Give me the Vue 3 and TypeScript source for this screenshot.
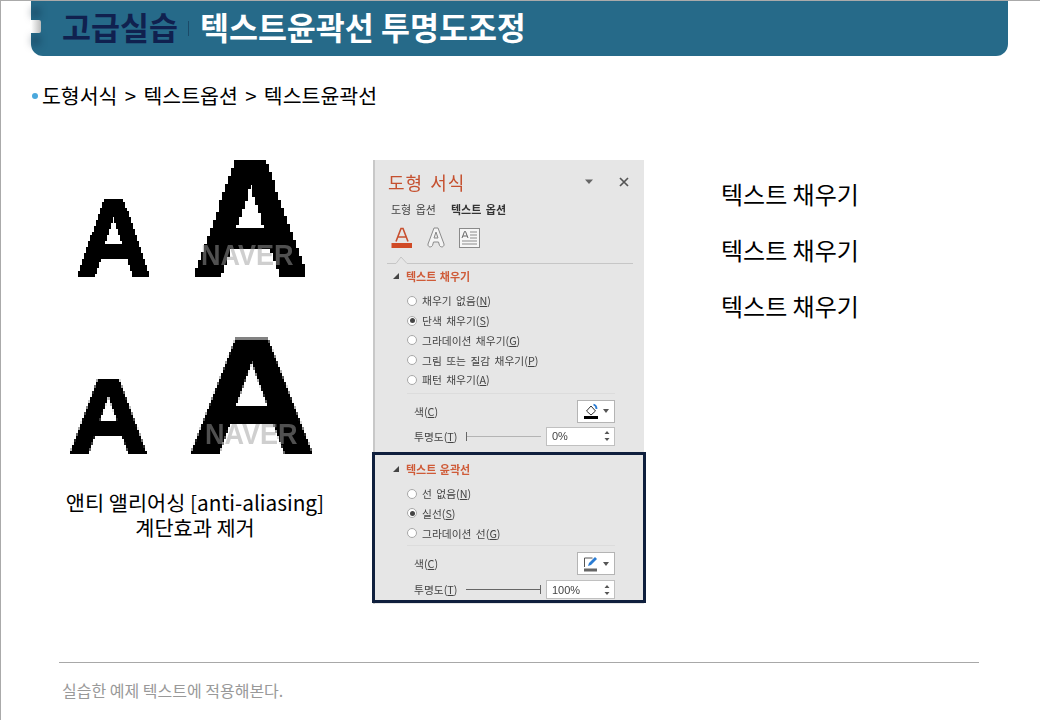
<script setup lang="ts">
const fillOptions = [
  { label: "채우기 없음", key: "N", on: false },
  { label: "단색 채우기", key: "S", on: true },
  { label: "그라데이션 채우기", key: "G", on: false },
  { label: "그림 또는 질감 채우기", key: "P", on: false },
  { label: "패턴 채우기", key: "A", on: false },
];

const lineOptions = [
  { label: "선 없음", key: "N", on: false },
  { label: "실선", key: "S", on: true },
  { label: "그라데이션 선", key: "G", on: false },
];

const samples = ["텍스트 채우기", "텍스트 채우기", "텍스트 채우기"];
</script>

<template>
  <div class="slide">
    <svg class="defs" width="0" height="0" aria-hidden="true">
      <defs>
        <filter id="jag-big" x="-5%" y="-5%" width="110%" height="110%">
          <feFlood x="2" y="2" width="1" height="1" />
          <feComposite width="4" height="4" />
          <feTile result="grid" />
          <feComposite in="SourceGraphic" in2="grid" operator="in" />
          <feMorphology operator="dilate" radius="2" />
          <feComponentTransfer>
            <feFuncA type="discrete" tableValues="0 1" />
          </feComponentTransfer>
        </filter>
        <filter id="jag-small" x="-5%" y="-5%" width="110%" height="110%">
          <feFlood x="1" y="1" width="1" height="1" />
          <feComposite width="3" height="3" />
          <feTile result="grid" />
          <feComposite in="SourceGraphic" in2="grid" operator="in" />
          <feMorphology operator="dilate" radius="1" />
          <feComponentTransfer>
            <feFuncA type="discrete" tableValues="0 1" />
          </feComponentTransfer>
        </filter>
        <filter id="jag-soft" x="-5%" y="-5%" width="110%" height="110%">
          <feFlood x="1" y="1" width="1" height="1" />
          <feComposite width="3" height="3" />
          <feTile result="grid" />
          <feComposite in="SourceGraphic" in2="grid" operator="in" />
          <feMorphology operator="dilate" radius="1" />
        </filter>
      </defs>
    </svg>

    <header class="bar">
      <span class="bar-tab"></span>
      <span class="bar-label">고급실습</span>
      <span class="bar-sep"></span>
      <span class="bar-title">텍스트윤곽선 투명도조정</span>
    </header>

    <p class="crumb"><i class="dot"></i>도형서식 &gt; 텍스트옵션 &gt; 텍스트윤곽선</p>

    <main class="columns">
      <section class="letters">
        <div class="letter-row row-top">
          <span class="glyph g1">A</span>
          <div class="glyph-wrap">
            <span class="glyph g2">A</span>
            <span class="mark">NAVER</span>
          </div>
        </div>
        <div class="letter-row row-bottom">
          <span class="glyph g3">A</span>
          <div class="glyph-wrap">
            <span class="glyph g4">A</span>
            <span class="mark">NAVER</span>
          </div>
        </div>
        <p class="caption">앤티 앨리어싱 [anti-aliasing]<br />계단효과 제거</p>
      </section>

      <section class="panel">
        <div class="panel-head">
          <span class="panel-title">도형 서식</span>
          <span class="panel-tools">
            <svg width="10" height="6" viewBox="0 0 10 6"><path d="M1 0.5h8L5 5z" fill="#666" /></svg>
            <svg width="10" height="10" viewBox="0 0 10 10"><path d="M1 1l8 8M9 1l-8 8" stroke="#555" stroke-width="1.7" fill="none" /></svg>
          </span>
        </div>
        <div class="panel-tabs">
          <span>도형 옵션</span>
          <span class="tab-on">텍스트 옵션</span>
        </div>
        <div class="panel-icons">
          <svg width="22" height="22" viewBox="0 0 22 22">
            <path d="M5 14.5L10 1.5h2l5 13M7 10h8" fill="none" stroke="#c8502f" stroke-width="1.6" />
            <rect x="0.5" y="16" width="20.5" height="5" fill="#d04a26" />
          </svg>
          <svg width="18" height="22" viewBox="0 0 18 22">
            <path d="M7 1h4l6 16c.5 3-3 4-4.500 1.500L11.500 15h-5l-1 3.500C4 21 .5 20 1 17z" fill="#f4f4f4" stroke="#8a8a8a" stroke-width="1" />
            <path d="M9 5L7 11h4z" fill="#e6e6e6" stroke="#8a8a8a" stroke-width="1" />
          </svg>
          <svg width="21" height="20" viewBox="0 0 21 20">
            <rect x="0.500" y="0.500" width="20" height="19" fill="#f6f6f6" stroke="#8a8a8a" />
            <path d="M3 10l2.500-6.500h1L9 10M4 8h4" fill="none" stroke="#666" stroke-width="1" />
            <path d="M11 4h7M11 7h7M11 10h7M3 13h15M3 16h15" stroke="#8a8a8a" stroke-width="1" />
          </svg>
        </div>
        <svg class="panel-rule" width="246" height="8" viewBox="0 0 246 8">
          <path d="M0 7.500H9L14 1l6 6.500H246" fill="none" stroke="#c6c6c6" stroke-width="1" />
        </svg>

        <div class="group">
          <h3 class="group-title"><i class="caret"></i>텍스트 채우기</h3>
          <div class="radios">
            <label v-for="opt in fillOptions" :key="opt.key" class="radio">
              <i class="circle" :class="{ on: opt.on }"></i>
              <span>{{ opt.label }}(<u>{{ opt.key }}</u>)</span>
            </label>
          </div>
          <div class="sep"></div>
          <div class="field field-color">
            <span>색(<u>C</u>)</span>
            <span class="pick">
              <svg width="16" height="16" viewBox="0 0 16 16">
                <path d="M8 3l4.500 5L8 12 3.500 8z" fill="#fff" stroke="#333" stroke-width="1" />
                <path d="M10.500 1.500c2 .5 3 2.500 3 4.500" fill="none" stroke="#2b7cd3" stroke-width="1.800" />
                <rect x="1" y="13" width="14" height="3" fill="#000" />
              </svg>
              <i class="pick-caret"></i>
            </span>
          </div>
          <div class="field field-range">
            <span class="range-label">투명도(<u>T</u>)</span>
            <span class="slider">
              <i class="slider-knob"></i>
            </span>
            <span class="spin">
              0%
              <svg width="6" height="12" viewBox="0 0 6 12"><path d="M3 1l2.500 3h-5zM3 11L0.500 8h5z" fill="#555" /></svg>
            </span>
          </div>
        </div>

        <div class="group boxed">
          <h3 class="group-title"><i class="caret"></i>텍스트 윤곽선</h3>
          <div class="radios">
            <label v-for="opt in lineOptions" :key="opt.key" class="radio">
              <i class="circle" :class="{ on: opt.on }"></i>
              <span>{{ opt.label }}(<u>{{ opt.key }}</u>)</span>
            </label>
          </div>
          <div class="sep"></div>
          <div class="field field-color">
            <span>색(<u>C</u>)</span>
            <span class="pick">
              <svg width="16" height="16" viewBox="0 0 16 16">
                <path d="M1.500 11V2h8" fill="none" stroke="#555" stroke-width="1" />
                <path d="M5 10l1-3 6-6 2 2-6 6z" fill="#2b7cd3" />
                <rect x="1" y="12.500" width="13" height="3" fill="#666" />
              </svg>
              <i class="pick-caret"></i>
            </span>
          </div>
          <div class="field field-range">
            <span class="range-label">투명도(<u>T</u>)</span>
            <span class="slider slider-full">
              <i class="slider-knob"></i>
            </span>
            <span class="spin">
              100%
              <svg width="6" height="12" viewBox="0 0 6 12"><path d="M3 1l2.500 3h-5zM3 11L0.500 8h5z" fill="#555" /></svg>
            </span>
          </div>
        </div>
      </section>

      <section class="samples">
        <p v-for="(text, i) in samples" :key="i">{{ text }}</p>
      </section>
    </main>

    <footer class="foot">
      <p>실습한 예제 텍스트에 적용해본다.</p>
    </footer>
  </div>
</template>

<style scoped>
.slide {
  position: relative;
  box-sizing: border-box;
  width: 1040px;
  height: 720px;
  overflow: hidden;
  border-left: 1px solid #aaa;
  border-top: 1px solid #aaa;
  background: #fff;
  color: #000;
  font-family: "Noto Sans CJK KR", "Noto Sans", sans-serif;
}

.defs {
  position: absolute;
}

.bar {
  position: relative;
  display: flex;
  align-items: center;
  box-sizing: border-box;
  width: 977px;
  height: 56px;
  margin: -1px 0 0 30px;
  padding: 0 0 5px 31px;
  background: #266a89;
  border-radius: 0 0 12px 12px;
}

.bar-tab {
  position: absolute;
  left: -1px;
  top: 20px;
  width: 11px;
  height: 13px;
  border-radius: 0 2px 2px 0;
  background: linear-gradient(90deg, #fff 10%, #bbb 100%);
  box-shadow: 0 -14px 8px -3px rgba(8, 25, 45, 0.75), 0 14px 8px -3px rgba(8, 25, 45, 0.75);
}

.bar-label {
  font-size: 31.5px;
  font-weight: 700;
  line-height: 50px;
  color: #10214f;
}

.bar-sep {
  flex: none;
  width: 1px;
  height: 15px;
  margin: 5px 11px 0 10px;
  background: #1b4a68;
}

.bar-title {
  font-size: 31.5px;
  font-weight: 700;
  line-height: 50px;
  color: #fff;
}

.crumb {
  display: flex;
  align-items: center;
  margin: 24px 0 0 30px;
  font-size: 20.5px;
  line-height: 30px;
  word-spacing: 2.75px;
}

.dot {
  width: 6px;
  height: 6px;
  margin: 2px 4px 0 1px;
  border-radius: 50%;
  background: #4aa8dc;
}

.columns {
  display: flex;
  align-items: flex-start;
  margin-top: 50px;
  padding-left: 60px;
}

.letters {
  width: 310px;
  flex: none;
}

.letter-row {
  display: flex;
  align-items: flex-end;
}

.row-top {
  height: 118px;
  padding-left: 15px;
}

.row-bottom {
  height: 118px;
  margin-top: 59px;
  padding-left: 8px;
}

.glyph-wrap {
  position: relative;
}

.glyph {
  display: block;
  font-family: "Liberation Sans", Arial, sans-serif;
  font-weight: 700;
  line-height: 0.716;
  -webkit-text-stroke: 2px #000;
  transform-origin: left bottom;
}

.g1 {
  width: 79px;
  font-size: 110px;
  transform: scaleX(0.95);
  filter: url(#jag-small);
}

.g2 {
  width: 119px;
  margin-left: 37px;
  font-size: 165px;
  transform: scaleX(0.983);
  filter: url(#jag-big);
}

.g3 {
  width: 77px;
  font-size: 106px;
  transform: scaleX(1.03);
  filter: url(#jag-soft);
}

.g4 {
  width: 120px;
  margin-left: 42px;
  font-size: 165px;
  transform: scaleX(1.07);
  filter: url(#jag-soft);
}

.mark {
  position: absolute;
  left: 46px;
  bottom: 11px;
  font-family: "Liberation Sans", Arial, sans-serif;
  font-size: 30px;
  font-weight: 700;
  line-height: 24px;
  color: rgba(160, 160, 160, 0.5);
  transform: scaleX(0.9);
  transform-origin: left bottom;
}

.row-bottom .mark {
  left: 59px;
  bottom: 9px;
}

.caption {
  margin: 35px 0 0 -60px;
  width: 388px;
  font-size: 20.8px;
  line-height: 25px;
  text-align: center;
}

.panel {
  display: flex;
  flex-direction: column;
  box-sizing: border-box;
  flex: none;
  width: 271px;
  height: 444px;
  margin-left: 2px;
  background: #e6e6e6;
  border-left: 2px solid #c8c8c8;
  color: #444;
  font-size: 10.75px;
  word-spacing: 2px;
  filter: blur(0.4px);
}

.panel-head {
  display: flex;
  justify-content: space-between;
  align-items: center;
  height: 20px;
  margin: 12px 15px 0 13px;
}

.panel-title {
  font-size: 18px;
  line-height: 20px;
  letter-spacing: 1px;
  color: #c5502f;
}

.panel-tools {
  display: flex;
  align-items: center;
  gap: 25px;
}

.panel-tabs {
  display: flex;
  gap: 15px;
  height: 14px;
  margin: 10px 0 0 16px;
  font-size: 11px;
  line-height: 14px;
  color: #444;
}

.tab-on {
  font-weight: 700;
  color: #333;
}

.panel-icons {
  display: flex;
  align-items: center;
  gap: 14px;
  height: 22px;
  margin: 11px 0 0 16px;
}

.panel-rule {
  display: block;
  flex: none;
  margin: 7px 0 0 12px;
}

.group {
  display: flex;
  flex-direction: column;
  padding: 5px 29px 0 32px;
}

.boxed {
  box-sizing: border-box;
  height: 151px;
  margin: 6px -2px 0 -3px;
  padding: 7px 28px 0 32px;
  border: 3px solid #0f1f3d;
  overflow: hidden;
}

.group-title {
  display: flex;
  align-items: center;
  height: 14px;
  margin: 0 0 0 -14px;
  font-size: 11px;
  font-weight: 700;
  line-height: 14px;
  word-spacing: 1px;
  color: #cf5b38;
}

.caret {
  width: 0;
  height: 0;
  margin-right: 7px;
  border-left: 6px solid transparent;
  border-bottom: 6px solid #444;
}

.radios {
  display: flex;
  flex-direction: column;
  margin-top: 8px;
}

.radio {
  display: flex;
  align-items: center;
  gap: 5px;
  height: 19.750px;
  line-height: 19px;
}

.circle {
  position: relative;
  box-sizing: border-box;
  width: 10px;
  height: 10px;
  border: 1px solid #a8a8a8;
  border-radius: 50%;
  background: #fff;
}

.circle.on::after {
  content: "";
  position: absolute;
  left: 1.500px;
  top: 1.500px;
  width: 5px;
  height: 5px;
  border-radius: 50%;
  background: #444;
}

.sep {
  height: 1px;
  margin: 3px 0 0 0;
  background: #dcdcdc;
}

.boxed .sep {
  margin-top: 2px;
}

.field {
  display: flex;
  align-items: center;
  padding-left: 7px;
}

.field-color {
  justify-content: space-between;
  height: 23px;
  margin-top: 6px;
}

.pick {
  display: flex;
  align-items: center;
  justify-content: center;
  gap: 4px;
  box-sizing: border-box;
  width: 38px;
  height: 23px;
  border: 1px solid #b4b4b4;
  background: #fff;
}

.pick-caret {
  width: 0;
  height: 0;
  border-left: 3.500px solid transparent;
  border-right: 3.500px solid transparent;
  border-top: 4px solid #555;
}

.field-range {
  height: 19px;
  margin-top: 4px;
}

.boxed .field-range {
  margin-top: 5px;
}

.range-label {
  width: 52px;
  flex: none;
}

.slider {
  position: relative;
  flex: none;
  width: 75px;
  height: 1px;
  background: #b4b4b4;
}

.slider-knob {
  position: absolute;
  left: 0;
  top: -4px;
  width: 1px;
  height: 9px;
  background: #666;
}

.slider-full {
  background: #666;
}

.slider-full .slider-knob {
  left: 74px;
}

.spin {
  display: flex;
  align-items: center;
  justify-content: space-between;
  box-sizing: border-box;
  flex: none;
  width: 69px;
  height: 19px;
  margin-left: 5px;
  padding: 0 4px 0 5px;
  border: 1px solid #c0c0c0;
  background: #fff;
  font-family: "Liberation Sans", Arial, sans-serif;
  font-size: 11px;
}

.samples {
  margin-left: 77px;
  padding-top: 20px;
}

.samples p {
  margin: 0 0 28px;
  font-size: 24px;
  line-height: 28px;
  white-space: nowrap;
}

.foot {
  position: absolute;
  left: 58px;
  top: 661px;
  width: 920px;
  border-top: 1px solid #a8a8a8;
}

.foot p {
  margin: 16px 0 0 3px;
  font-size: 16px;
  line-height: 22px;
  color: #999;
}
</style>

<style>
html,
body {
  margin: 0;
  background: #fff;
}
</style>
